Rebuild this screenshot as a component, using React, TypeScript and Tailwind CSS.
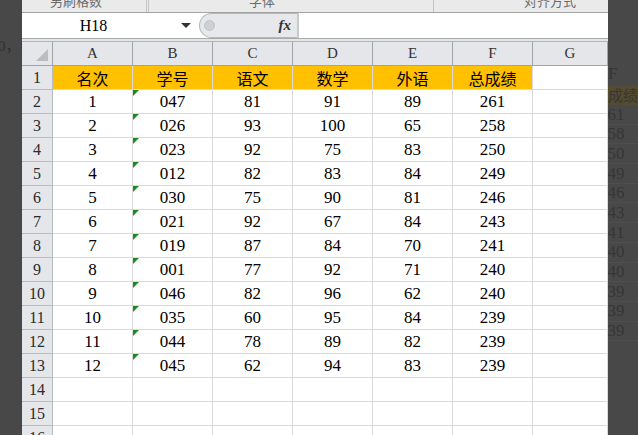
import { Fragment } from "react"

const COLS = ["A", "B", "C", "D", "E", "F", "G"]
const HEAD = ["名次", "学号", "语文", "数学", "外语", "总成绩"]
const ROWS = [
  ["1", "047", "81", "91", "89", "261"],
  ["2", "026", "93", "100", "65", "258"],
  ["3", "023", "92", "75", "83", "250"],
  ["4", "012", "82", "83", "84", "249"],
  ["5", "030", "75", "90", "81", "246"],
  ["6", "021", "92", "67", "84", "243"],
  ["7", "019", "87", "84", "70", "241"],
  ["8", "001", "77", "92", "71", "240"],
  ["9", "046", "82", "96", "62", "240"],
  ["10", "035", "60", "95", "84", "239"],
  ["11", "044", "78", "89", "82", "239"],
  ["12", "045", "62", "94", "83", "239"],
]
const GHOST = ["261", "258", "250", "249", "246", "243", "241", "240", "240", "239", "239", "239"]

const serif = "font-['Liberation_Serif','Noto_Sans_CJK_SC',serif]"
const rowHead = `h-6 flex items-center justify-center border-r border-b border-[#b8bcc2] bg-[#e4e6ea] text-[16px] text-[#2b2b2b] ${serif}`
const cell = `h-6 flex items-center justify-center border-r border-b border-[#d9d9d9] text-[17px] text-black ${serif}`

const Spreadsheet = () => {
  return (
    <div className="grid grid-cols-[31px_80px_80px_80px_80px_80px_80px_75px] bg-white">
      {/* column headers */}
      <div className="relative h-6 border-r border-b border-[#9fa4ab] bg-[#e4e6ea]">
        <div className="absolute right-1 bottom-1 w-0 h-0 border-l-[12px] border-l-transparent border-b-[12px] border-b-[#b9bcc1]" />
      </div>
      {COLS.map((c) => (
        <div key={c} className={`h-6 flex items-center justify-center border-r border-b border-[#9fa4ab] bg-[#e4e6ea] text-[15px] text-[#333] ${serif}`}>
          {c}
        </div>
      ))}

      {/* row 1 */}
      <div className={rowHead}>1</div>
      {HEAD.map((h) => (
        <div key={h} className="h-6 flex items-center justify-center border-r border-b border-[#d9d9d9] bg-[#ffc000] text-[16px] text-black font-['Noto_Sans_CJK_SC',sans-serif]">
          {h}
        </div>
      ))}
      <div className={cell} />

      {ROWS.map((r, i) => (
        <Fragment key={i}>
          <div className={rowHead}>{i + 2}</div>
          {r.map((v, j) => (
            <div key={j} className={`${cell} relative`}>
              {j === 1 && (
                <div className="absolute left-0 top-0 w-0 h-0 border-t-[6px] border-t-[#1e8a1e] border-r-[6px] border-r-transparent" />
              )}
              {v}
            </div>
          ))}
          <div className={cell} />
        </Fragment>
      ))}

      {[14, 15, 16].map((n) => (
        <Fragment key={n}>
          <div className={rowHead}>{n}</div>
          {COLS.map((c) => (
            <div key={c} className={cell} />
          ))}
        </Fragment>
      ))}
    </div>
  )
}

const App = () => {
  return (
    <div className="w-[638px] h-[435px] flex bg-[#484848] overflow-hidden">
      {/* dimmed backdrop, left */}
      <div className="w-[22px] shrink-0 pt-[35px] overflow-hidden">
        <p className="text-[15px] text-[#2e2e2e] whitespace-nowrap -ml-[2px] font-['Liberation_Serif','Noto_Sans_CJK_SC',serif]">0，绩</p>
      </div>

      {/* excel window */}
      <div className="w-[586px] shrink-0 flex flex-col overflow-hidden">
        <div className="h-[13px] shrink-0 flex bg-[#eaeaea] border-b border-[#a3a3a3] overflow-hidden text-[13px] text-[#6a6a6a] font-['Noto_Sans_CJK_SC',sans-serif]">
          <div className="w-[127px] border-r-[3px] border-double border-[#c4c4c4] pl-[28px] -mt-[9px]">另刷格数</div>
          <div className="w-[285px] border-r border-[#c4c4c4] -mt-[9px] pl-[100px]">字体</div>
          <div className="flex-1 -mt-[9px] pl-[90px]">对齐方式</div>
        </div>

        <div className="h-[26px] shrink-0 flex items-center bg-white border-b border-[#a9a9a9]">
          <div className="w-[177px] h-full flex items-center">
            <span className={`flex-1 text-center text-[16px] text-black pr-[16px] ${serif}`}>H18</span>
            <div className="w-0 h-0 mr-[8px] border-l-[5px] border-l-transparent border-r-[5px] border-r-transparent border-t-[5px] border-t-[#333]" />
          </div>
          <div className="w-[99px] h-full flex items-center justify-between rounded-l-full bg-[#e6e8eb] border border-[#b4b6b9] border-r-[#c9c9c9] pl-[4px] pr-[6px]">
            <div className="w-[11px] h-[11px] rounded-full bg-[#cdd0d4] border border-[#c0c3c7]" />
            <span className="text-[15px] italic font-bold text-[#333] font-['Liberation_Serif',serif]">fx</span>
          </div>
          <div className="flex-1 h-full border-l border-[#c9c9c9]" />
        </div>

        <div className="h-[3px] shrink-0 bg-[#e6e6e6] border-b border-[#b3b3b3]" />

        <Spreadsheet />
      </div>

      {/* dimmed backdrop, right */}
      <div className="w-[30px] shrink-0 flex flex-col overflow-hidden pt-[63px] text-[17px] text-[#363636] font-['Liberation_Serif','Noto_Sans_CJK_SC',serif]">
        <div className="h-[22px] flex items-center">F</div>
        <div className="h-[20px] flex items-center bg-[#544b30] -ml-[15px] whitespace-nowrap text-[15px] font-['Noto_Sans_CJK_SC',sans-serif]">总成绩</div>
        {GHOST.map((g, i) => (
          <div key={i} className="h-[19.7px] flex items-center -ml-[9px] border-b border-[#4e4e4e]">{g}</div>
        ))}
      </div>
    </div>
  )
}

export default App
